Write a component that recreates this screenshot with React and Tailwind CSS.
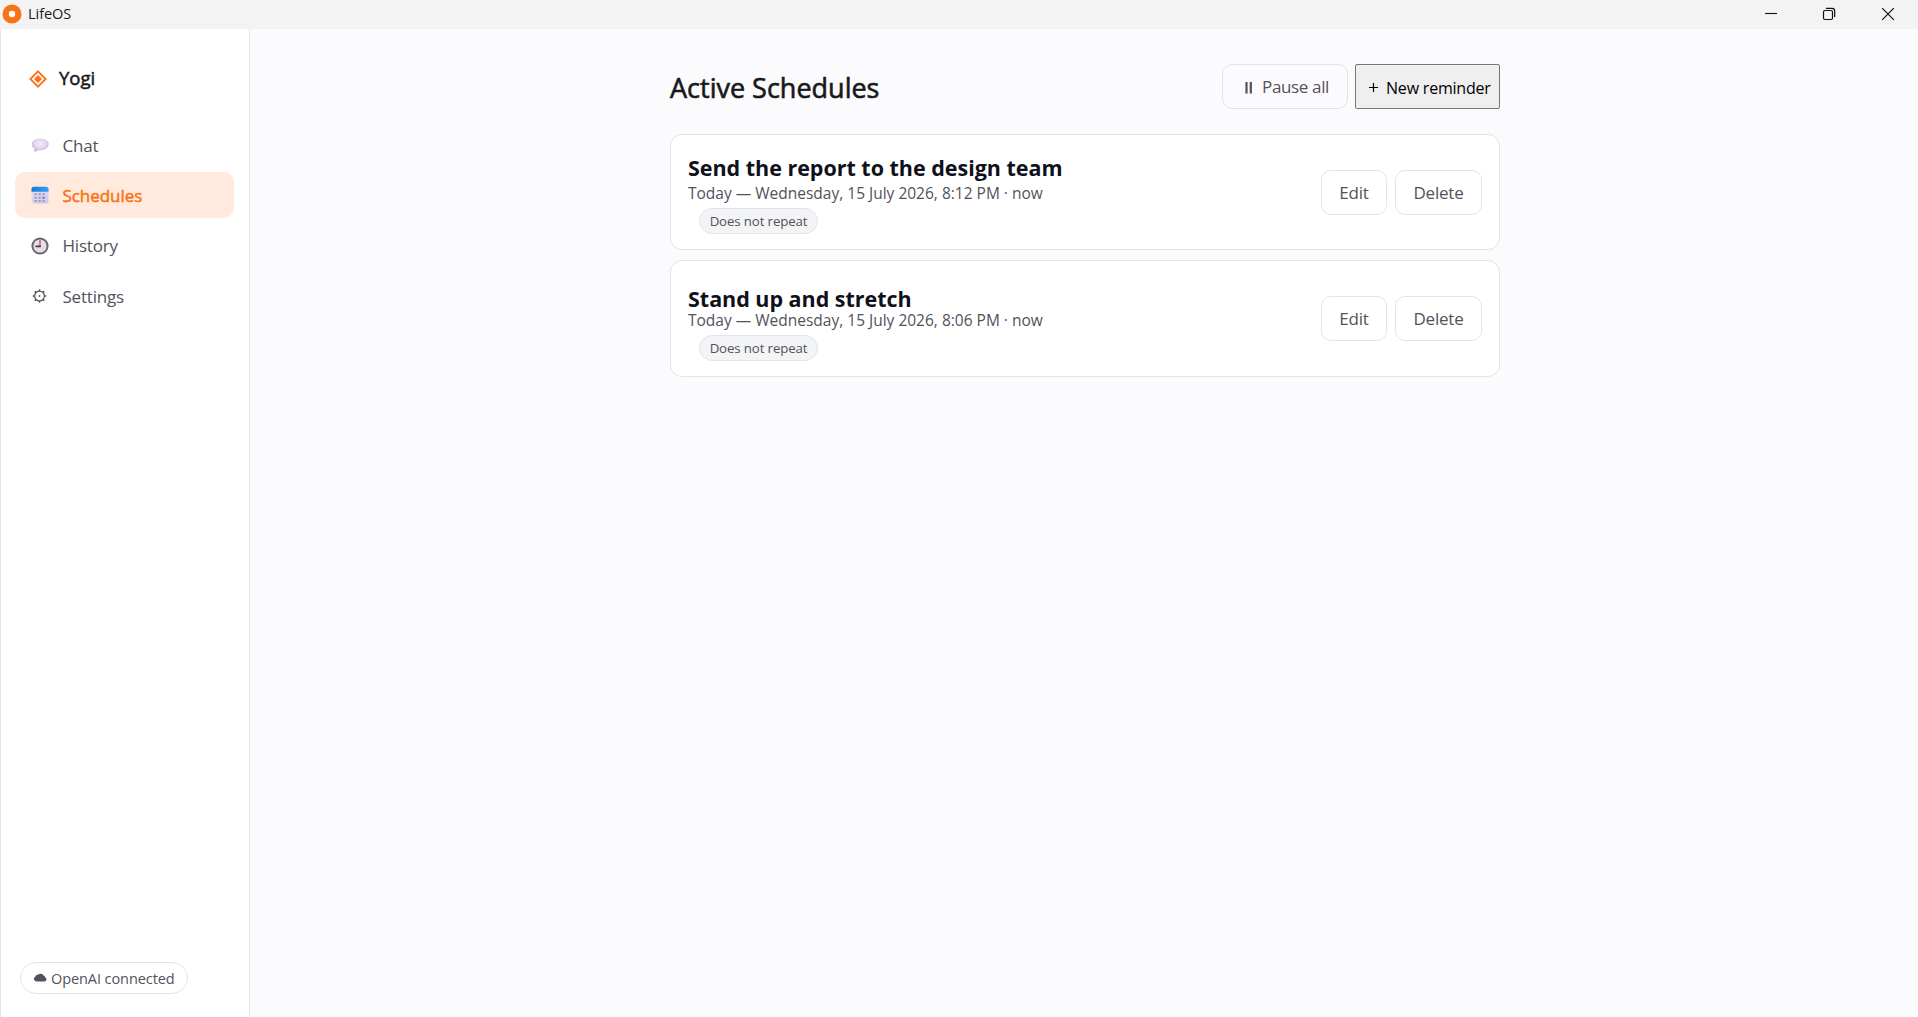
function LogoIcon() {
  return (
    <svg width="18" height="18" viewBox="0 0 18 18" className="shrink-0">
      <path d="M9 1.400 16.600 9 9 16.600 1.400 9Z" fill="none" stroke="#f97316" strokeWidth="1.900" />
      <path d="M9 5 13 9 9 13 5 9Z" fill="#f97316" />
    </svg>
  );
}

function ChatIcon() {
  return (
    <svg width="18" height="18" viewBox="0 0 18 18" className="shrink-0">
      <defs>
        <radialGradient id="bubble" cx="0.5" cy="0.4" r="0.6">
          <stop offset="0" stopColor="#f1ecf7" />
          <stop offset="0.6" stopColor="#e0d6ed" />
          <stop offset="1" stopColor="#baa6d6" />
        </radialGradient>
      </defs>
      <path
        d="M9.200 2.600c-4.900 0-8.400 2.400-8.400 5.700 0 1.800 1 3.300 2.700 4.400.2.900.1 1.900-.5 2.900 1.700 0 3-.600 3.900-1.600.7.1 1.500.2 2.300.2 4.800 0 8.500-2.500 8.500-5.900S14 2.600 9.200 2.600Z"
        fill="url(#bubble)"
      />
    </svg>
  );
}

function CalendarIcon() {
  const rows = [7.3, 10.7, 14.1];
  const cols = [3.4, 7.4, 11.4];
  return (
    <svg width="18" height="18" viewBox="0 0 18 18" className="shrink-0">
      <defs>
        <linearGradient id="calTop" x1="0" x2="1">
          <stop offset="0" stopColor="#1b78d8" />
          <stop offset="1" stopColor="#35a0fa" />
        </linearGradient>
        <linearGradient id="calBody" x1="0" x2="1" y1="0" y2="1">
          <stop offset="0" stopColor="#e2dff0" />
          <stop offset="1" stopColor="#d6c6ea" />
        </linearGradient>
      </defs>
      <rect x="0.5" y="0.8" width="17" height="17" rx="2.5" fill="url(#calBody)" />
      <path d="M3 .8h12A2.500 2.500 0 0 1 17.500 3.300V5.800H.5V3.300A2.500 2.500 0 0 1 3 .8Z" fill="url(#calTop)" />
      {rows.map((y, r) =>
        cols.map((x, c) => (
          <rect
            key={`${x}-${y}`}
            x={x}
            y={y}
            width="2.4"
            height="2"
            rx="0.5"
            fill={r === 1 && c === 2 ? "#2f8ff0" : "#a49cb6"}
          />
        ))
      )}
    </svg>
  );
}

function ClockIcon() {
  return (
    <svg width="18" height="18" viewBox="0 0 18 18" className="shrink-0">
      <circle cx="9" cy="9" r="7.6" fill="#e3dfe8" stroke="#69666d" strokeWidth="2" />
      <path d="M9 3.400V9" stroke="#e0395c" strokeWidth="1.200" strokeLinecap="round" />
      <path d="M9.300 9.300H5.200" stroke="#3f3a4a" strokeWidth="1.700" strokeLinecap="round" />
    </svg>
  );
}

function GearIcon() {
  const teeth = [0, 45, 90, 135, 180, 225, 270, 315];
  return (
    <svg width="18" height="18" viewBox="0 0 18 18" className="shrink-0">
      <circle cx="8.500" cy="9" r="4.900" fill="none" stroke="#52525b" strokeWidth="1.200" />
      <circle cx="8.500" cy="9" r="0.900" fill="#52525b" />
      {teeth.map((a) => (
        <path key={a} d="M8.500 2.300V4.200" stroke="#52525b" strokeWidth="1.500" transform={`rotate(${a} 8.500 9)`} />
      ))}
    </svg>
  );
}

const navItems = [
  { label: "Chat", Icon: ChatIcon },
  { label: "Schedules", Icon: CalendarIcon, active: true },
  { label: "History", Icon: ClockIcon },
  { label: "Settings", Icon: GearIcon },
];

const schedules = [
  {
    title: "Send the report to the design team",
    when: "Today — Wednesday, 15 July 2026, 8:12 PM · now",
    card: "h-[116px] pt-[18px]",
    heading: "leading-[30px]",
    actions: "mb-[34px]",
  },
  {
    title: "Stand up and stretch",
    when: "Today — Wednesday, 15 July 2026, 8:06 PM · now",
    card: "h-[117px] pt-[26px]",
    heading: "leading-[23px]",
    actions: "mb-[35px]",
  },
];

function TitleBar() {
  return (
    <header className="flex h-[29px] shrink-0 items-center bg-[#f3f3f3] pb-px pl-[2px]">
      <svg width="20" height="20" viewBox="0 0 20 20">
        <circle cx="10" cy="10" r="9.500" fill="#f97316" />
        <circle cx="10" cy="10" r="3.200" fill="#fff" />
      </svg>
      <span className="ml-[6px] text-[14.5px] leading-[20px] tracking-[-0.05px] text-[#1b1b1b]">LifeOS</span>
      <div className="ml-auto flex items-center pr-[23px]">
        <svg width="14" height="14" viewBox="0 0 14 14">
          <path d="M1 6.500h12" stroke="#111" strokeWidth="1.100" />
        </svg>
        <svg width="14" height="14" viewBox="0 0 14 14" className="ml-[44px]" fill="none" stroke="#111" strokeWidth="1.200">
          <rect x="1.500" y="3.500" width="9" height="9" rx="1.500" />
          <path d="M4 1.300h6a2.700 2.700 0 0 1 2.700 2.700v6" />
        </svg>
        <svg width="14" height="14" viewBox="0 0 14 14" className="ml-[45px]">
          <path d="M1.200 1.200 12.800 12.800M12.800 1.200 1.200 12.800" stroke="#111" strokeWidth="1.200" />
        </svg>
      </div>
    </header>
  );
}

function Sidebar() {
  return (
    <aside className="flex w-[250px] shrink-0 flex-col border-x border-[#e4e4e7] bg-white pb-[23px] pl-[14px] pr-[15px]">
      <div className="mt-[36px] flex h-[28px] items-center gap-3 pl-[14px]">
        <LogoIcon />
        <span className="pb-[3px] text-[18.5px] leading-[25px] text-[#18181b] [-webkit-text-stroke:0.5px]">Yogi</span>
      </div>
      <nav className="mt-[29.2px] flex flex-col gap-[4.25px]">
        {navItems.map(({ label, Icon, active }) => (
          <a
            key={label}
            className={
              active
                ? "flex h-[46px] items-center gap-[14px] rounded-[10px] bg-[#ffeadd] pl-[15.5px] text-[17px] tracking-[-0.05px] text-[#f97316] [-webkit-text-stroke:0.5px]"
                : "flex h-[46px] items-center gap-[14px] rounded-[10px] pl-[15.5px] text-[17px] tracking-[-0.2px] text-[#52525b]"
            }
          >
            <Icon />
            <span className="pt-px">{label}</span>
          </a>
        ))}
      </nav>
      <div className="ml-[5px] mt-auto flex h-8 w-[168px] items-center rounded-full border border-[#e4e4e7] pl-[12px] text-[14.5px] text-[#52525b]">
        <svg width="14" height="10" viewBox="0 0 14 10">
          <path
            d="M3.400 8.500A2.600 2.600 0 0 1 2.500 3.500 2.800 2.800 0 0 1 5.400 1.600 3.300 3.300 0 0 1 10.500 2.600 2.300 2.300 0 0 1 12.300 4.400 2.200 2.200 0 0 1 11.500 8.500Z"
            fill="#52525b"
          />
        </svg>
        <span className="ml-[4px] whitespace-nowrap pt-[2px] tracking-[-0.08px]">OpenAI connected</span>
      </div>
    </aside>
  );
}

function CardActions({ className }) {
  return (
    <div className={`ml-auto flex gap-2 self-end ${className}`}>
      <button className="h-[45px] w-[66px] rounded-[10px] border border-[#e4e4e7] pt-px text-[17px] tracking-[-0.2px] text-[#52525b]">
        Edit
      </button>
      <button className="h-[45px] w-[87px] rounded-[10px] border border-[#e4e4e7] pt-px text-[17px] tracking-[-0.2px] text-[#52525b]">
        Delete
      </button>
    </div>
  );
}

function ScheduleCard({ title, when, card, heading, actions }) {
  return (
    <article className={`flex rounded-[12px] border border-[#e4e4e7] bg-white px-[17px] ${card}`}>
      <div className="flex flex-col items-start">
        <h2 className={`text-[21.5px] font-bold tracking-[-0.02px] text-[#0f111a] ${heading}`}>{title}</h2>
        <p className="text-[15.5px] leading-[21px] text-[#52525b]">{when}</p>
        <span className="ml-[11px] mt-1 flex h-[26px] w-[119px] items-center justify-center whitespace-nowrap rounded-full border border-[#e4e4e7] bg-[#f3f4f6] pt-px text-[13.25px] leading-none tracking-[-0.12px] text-[#52525b]">
          Does not repeat
        </span>
      </div>
      <CardActions className={actions} />
    </article>
  );
}

export default function App() {
  return (
    <div className="flex h-screen flex-col overflow-hidden bg-[#fbfbfd] font-['Open_Sans','Noto_Sans',sans-serif]">
      <TitleBar />
      <div className="flex min-h-0 flex-1">
        <Sidebar />
        <main className="flex-1 pl-[2px]">
          <div className="mx-auto w-[830px] pt-[35px]">
            <div className="flex h-[45px] items-center">
              <h1 className="pt-[2px] text-[27px] leading-[43px] text-[#18181b] [-webkit-text-stroke:0.6px]">
                Active Schedules
              </h1>
              <button className="ml-auto flex h-[45px] w-[126px] items-center rounded-[10px] border border-[#e4e4e7] pl-[20px] text-[17px] tracking-[-0.35px] text-[#52525b]">
                <svg width="12" height="14" viewBox="0 0 12 14">
                  <path d="M3.500 2V13.500M7.800 2V13.500" stroke="#52525b" strokeWidth="2.200" />
                </svg>
                <span className="ml-[7px] pt-px">Pause all</span>
              </button>
              <button className="ml-[7px] flex h-[45px] w-[145px] items-center rounded-[2px] border border-[#767676] bg-[#efefef] pl-[12px] text-[16px] tracking-[-0.2px] text-black">
                <svg width="11" height="11" viewBox="0 0 11 11" className="mt-px">
                  <path d="M1 5.500h9M5.500 1v9" stroke="#000" strokeWidth="1.200" />
                </svg>
                <span className="ml-[7px] whitespace-nowrap pt-[2px]">New reminder</span>
              </button>
            </div>
            <div className="mt-[25px] flex flex-col gap-[10px]">
              {schedules.map((s) => (
                <ScheduleCard key={s.title} {...s} />
              ))}
            </div>
          </div>
        </main>
      </div>
    </div>
  );
}
